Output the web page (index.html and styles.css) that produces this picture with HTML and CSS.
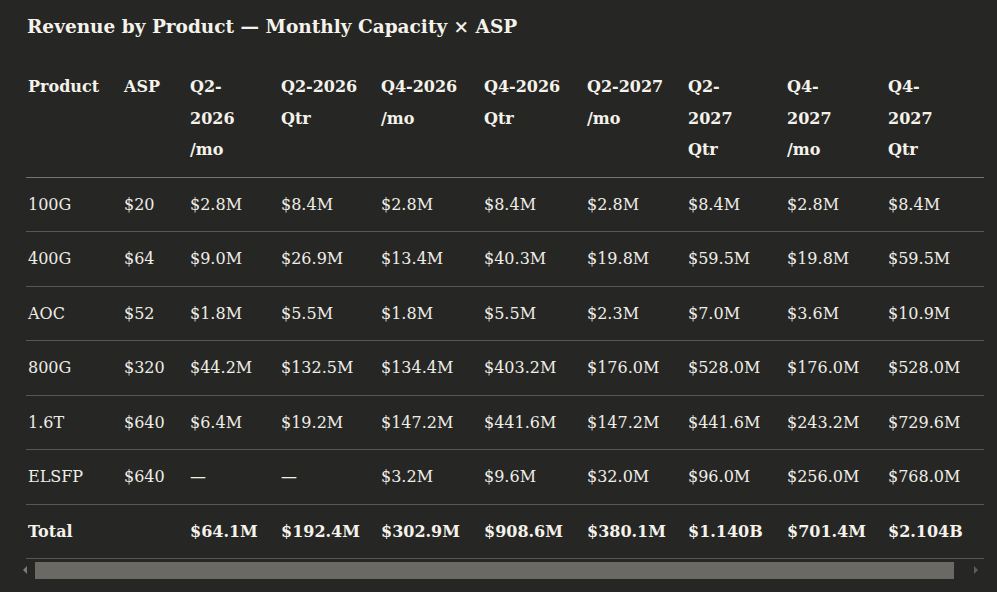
FILE: index.html
```html
<!DOCTYPE html>
<html lang="en">
<head>
<meta charset="utf-8">
<title>Revenue by Product</title>
<link rel="stylesheet" href="styles.css">
</head>
<body>
<main class="page">
  <h2 class="title">Revenue by Product — Monthly Capacity × ASP</h2>
  <div class="table-wrap">
    <table class="rev">
      <colgroup>
        <col class="c-prod"><col class="c-asp"><col class="c-q2m"><col class="c-q2q"><col class="c-q4m"><col class="c-q4q"><col class="c-q2m7"><col class="c-q2q7"><col class="c-q4m7"><col class="c-q4q7">
      </colgroup>
      <thead>
        <tr>
          <th>Product</th><th>ASP</th><th>Q2-<br>2026<br>/mo</th><th>Q2-2026<br>Qtr</th><th>Q4-2026<br>/mo</th><th>Q4-2026<br>Qtr</th><th>Q2-2027<br>/mo</th><th>Q2-<br>2027<br>Qtr</th><th>Q4-<br>2027<br>/mo</th><th>Q4-<br>2027<br>Qtr</th>
        </tr>
      </thead>
      <tbody>
        <tr><td>100G</td><td>$20</td><td>$2.8M</td><td>$8.4M</td><td>$2.8M</td><td>$8.4M</td><td>$2.8M</td><td>$8.4M</td><td>$2.8M</td><td>$8.4M</td></tr>
        <tr><td>400G</td><td>$64</td><td>$9.0M</td><td>$26.9M</td><td>$13.4M</td><td>$40.3M</td><td>$19.8M</td><td>$59.5M</td><td>$19.8M</td><td>$59.5M</td></tr>
        <tr><td>AOC</td><td>$52</td><td>$1.8M</td><td>$5.5M</td><td>$1.8M</td><td>$5.5M</td><td>$2.3M</td><td>$7.0M</td><td>$3.6M</td><td>$10.9M</td></tr>
        <tr><td>800G</td><td>$320</td><td>$44.2M</td><td>$132.5M</td><td>$134.4M</td><td>$403.2M</td><td>$176.0M</td><td>$528.0M</td><td>$176.0M</td><td>$528.0M</td></tr>
        <tr><td>1.6T</td><td>$640</td><td>$6.4M</td><td>$19.2M</td><td>$147.2M</td><td>$441.6M</td><td>$147.2M</td><td>$441.6M</td><td>$243.2M</td><td>$729.6M</td></tr>
        <tr><td>ELSFP</td><td>$640</td><td>—</td><td>—</td><td>$3.2M</td><td>$9.6M</td><td>$32.0M</td><td>$96.0M</td><td>$256.0M</td><td>$768.0M</td></tr>
        <tr class="total"><td>Total</td><td></td><td>$64.1M</td><td>$192.4M</td><td>$302.9M</td><td>$908.6M</td><td>$380.1M</td><td>$1.140B</td><td>$701.4M</td><td>$2.104B</td></tr>
      </tbody>
    </table>
  </div>
  <div class="scrollbar">
    <span class="arrow arrow-left"></span>
    <div class="track"><div class="thumb"></div></div>
    <span class="arrow arrow-right"></span>
  </div>
</main>
</body>
</html>
```

FILE: styles.css
```css
html, body {
  margin: 0;
  padding: 0;
  background: #262624;
}

.page {
  width: 967px;
  padding: 0 13px 0 17px;
  font-family: "DejaVu Serif", "Liberation Serif", serif;
  color: #ecebe4;
}

.title {
  margin: 0 0 0 10px;
  padding-top: 14px;
  height: 60px;
  box-sizing: border-box;
  font-size: 18.5px;
  line-height: 26px;
  font-weight: bold;
  color: #f4f2ea;
  white-space: nowrap;
}

.table-wrap {
  padding-left: 9px;
  overflow: hidden;
}

.rev {
  border-collapse: collapse;
  table-layout: fixed;
  width: 958px;
  font-size: 16px;
  line-height: 31.5px;
}

.c-prod { width: 96px; }
.c-asp { width: 66px; }
.c-q2m { width: 91px; }
.c-q2q { width: 100px; }
.c-q4m { width: 103px; }
.c-q4q { width: 103px; }
.c-q2m7 { width: 101px; }
.c-q2q7 { width: 99px; }
.c-q4m7 { width: 101px; }
.c-q4q7 { width: 98px; }

.rev th,
.rev td {
  text-align: left;
  vertical-align: top;
  padding: 11px 4px 11px 2px;
  white-space: nowrap;
  overflow: visible;
}

.rev th {
  font-weight: bold;
  color: #f4f2ea;
  border-bottom: 1px solid #74736e;
}

.rev td {
  border-bottom: 1px solid #585752;
  color: #eeede6;
}

.rev .total td {
  font-weight: bold;
  color: #f4f2ea;
}

.scrollbar {
  display: flex;
  align-items: center;
  height: 18px;
  margin-top: 2px;
}

.arrow {
  width: 16px;
  height: 18px;
  display: flex;
  align-items: center;
  justify-content: center;
  flex: none;
}

.arrow::before {
  content: "";
  width: 0;
  height: 0;
  border-top: 4px solid transparent;
  border-bottom: 4px solid transparent;
}

.arrow-left::before {
  border-right: 4px solid #7c7b76;
}

.arrow-right::before {
  border-left: 4px solid #5e5d59;
}

.track {
  flex: 1;
  height: 17px;
  padding-left: 2px;
  box-sizing: border-box;
}

.thumb {
  width: 919px;
  height: 17px;
  background: #6a6964;
}
```
